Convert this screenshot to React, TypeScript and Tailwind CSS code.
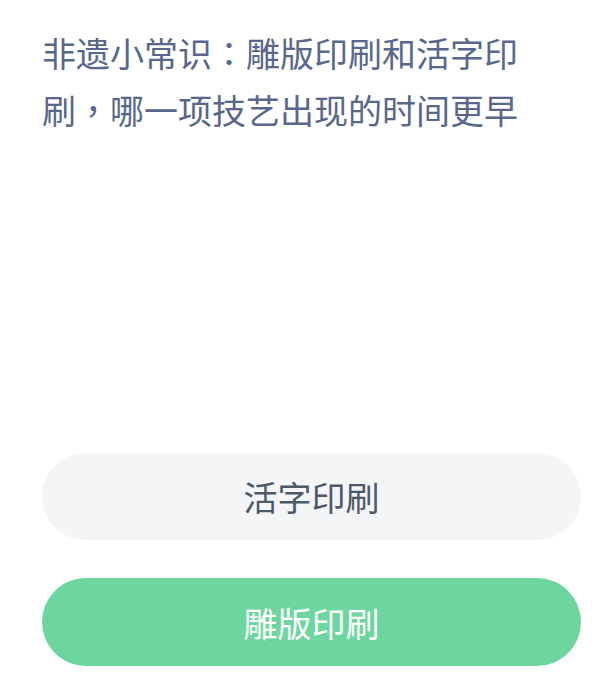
import React from 'react';

const options = [
  { label: '活字印刷', correct: false },
  { label: '雕版印刷', correct: true },
];

// full-width punctuation sits centred in its cell in the reference, as in TC fonts
function Punct({ children }: { children: React.ReactNode }) {
  return <span style={{ fontFamily: '"Noto Sans CJK TC", sans-serif' }}>{children}</span>;
}

export default function App() {
  return (
    <div
      className="w-[599px] h-[688px] bg-white px-[42px] pt-[24px] overflow-hidden [text-spacing-trim:space-all]"
      style={{ fontFamily: '"Noto Sans CJK SC", "Noto Sans", sans-serif' }}
    >
      <h1 className="w-[490px] text-[34px] leading-[57px] font-normal text-[#58678b]">
        非遗小常识<Punct>：</Punct>雕版印刷和活字印刷<Punct>，</Punct>哪一项技艺出现的时间更早
      </h1>

      <div className="mt-[315px] flex flex-col gap-[38px]">
        {options.map((opt) => (
          <button
            key={opt.label}
            className={
              opt.correct
                ? 'h-[88px] w-[539px] rounded-full bg-[#6dd69f] text-white text-[34px] flex items-center justify-center'
                : 'h-[87px] w-[539px] rounded-full bg-[#f4f5f7] text-[#4d586b] text-[34px] flex items-center justify-center'
            }
          >
            {opt.label}
          </button>
        ))}
      </div>
    </div>
  );
}
